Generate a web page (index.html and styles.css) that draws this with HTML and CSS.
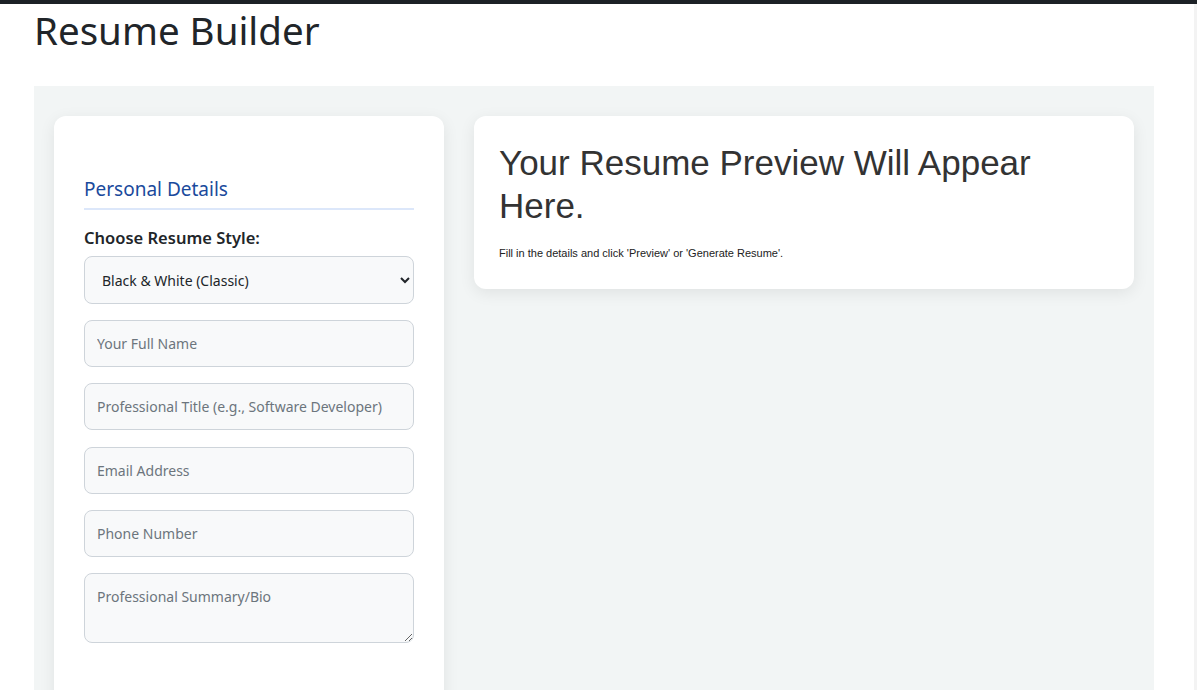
FILE: index.html
```html
<!DOCTYPE html>
<html lang="en">
<head>
    <meta charset="UTF-8">
    <title>Resume Builder</title>
    <link rel="stylesheet" href="styles.css">
</head>
<body>
    <div class="topbar"></div>
    <div class="page">
        <h1>Resume Builder</h1>

        <div class="container">
            <div class="form-card">
                <h2>Personal Details</h2>
                <label for="style">Choose Resume Style:</label>
                <select id="style">
                    <option>Black &amp; White (Classic)</option>
                    <option>Modern Blue</option>
                </select>
                <input type="text" placeholder="Your Full Name">
                <input type="text" placeholder="Professional Title (e.g., Software Developer)">
                <input type="email" placeholder="Email Address">
                <input type="tel" placeholder="Phone Number">
                <textarea placeholder="Professional Summary/Bio"></textarea>
            </div>

            <div class="preview-card">
                <h2>Your Resume Preview Will Appear Here.</h2>
                <p>Fill in the details and click 'Preview' or 'Generate Resume'.</p>
            </div>
        </div>
    </div>
</body>
</html>
```

FILE: styles.css
```css
body {
    margin: 0;
    font-family: "Noto Sans", sans-serif;
    color: #212529;
    background: #fff;
}
.topbar {
    height: 4px;
    background: #1c2126;
}
.page {
    padding: 0 40px 0 34px;
    border-right: 3px solid #f3f3f3;
    height: 686px;
    overflow: hidden;
}
h1 {
    font-size: 38.5px;
    font-weight: 400;
    margin: 0;
    padding-top: 2px;
    line-height: 48px;
    height: 80px;
}
.container {
    display: flex;
    align-items: flex-start;
    gap: 30px;
    width: 1080px;
    background: #f2f5f5;
    padding: 30px 20px;
}
.form-card {
    width: 330px;
    flex-shrink: 0;
    background: #fff;
    border-radius: 12px;
    padding: 60px 30px 40px;
    box-shadow: 0 4px 16px rgba(0, 0, 0, 0.08);
    height: 560px;
}
.form-card h2 {
    font-size: 19px;
    font-weight: 400;
    color: #1a4a9c;
    margin: 0 0 16px;
    padding-bottom: 6px;
    border-bottom: 2px solid #dce7fa;
}
label {
    display: block;
    font-size: 16.5px;
    font-weight: 600;
    margin-bottom: 7px;
}
select,
input,
textarea {
    display: block;
    box-sizing: border-box;
    width: 100%;
    height: 47px;
    margin-bottom: 16.2px;
    padding: 0 12px;
    font-family: "Noto Sans", sans-serif;
    font-size: 14px;
    color: #212529;
    background: #f8f9fa;
    border: 1px solid #ced4da;
    border-radius: 8px;
}
select {
    height: 48px;
    padding-left: 13px;
}
textarea {
    height: 70px;
    padding-top: 13px;
}
::placeholder {
    color: #6c757d;
}
.preview-card {
    flex: 1;
    background: #fff;
    border-radius: 12px;
    padding: 25px 25px 30px;
    box-shadow: 0 4px 16px rgba(0, 0, 0, 0.08);
    font-family: "Liberation Sans", Arial, sans-serif;
    color: #333;
}
.preview-card h2 {
    font-size: 35px;
    font-weight: 400;
    line-height: 43px;
    margin: 0 0 20px;
}
.preview-card p {
    font-size: 11px;
    margin: 0;
    color: #222;
}
```
